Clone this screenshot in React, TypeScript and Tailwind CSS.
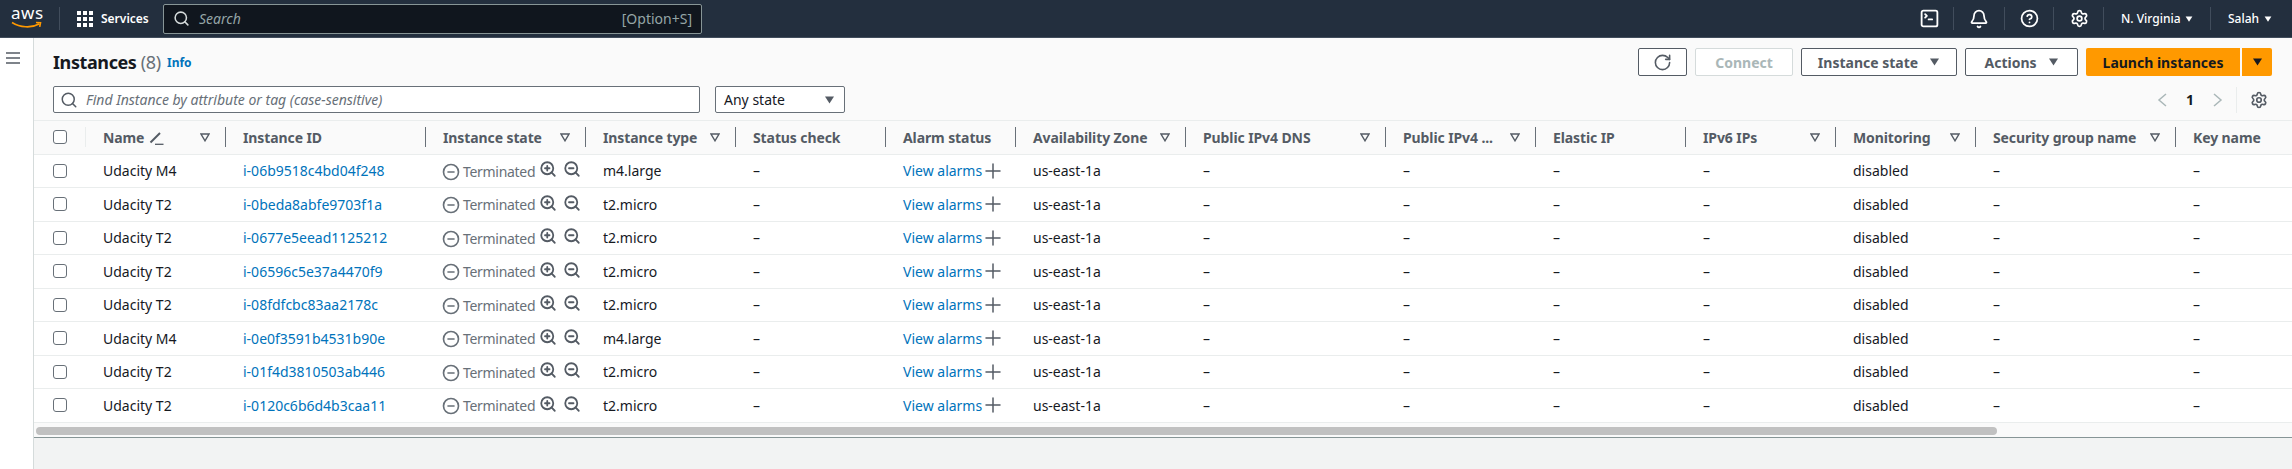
import { Bell, CircleHelp, CircleMinus, Plus, RotateCw, Search, Settings, SquareTerminal, ZoomIn, ZoomOut } from "lucide-react";
import type { ReactNode } from "react";

const instances = [
  { name: "Udacity M4", id: "i-06b9518c4bd04f248", type: "m4.large" },
  { name: "Udacity T2", id: "i-0beda8abfe9703f1a", type: "t2.micro" },
  { name: "Udacity T2", id: "i-0677e5eead1125212", type: "t2.micro" },
  { name: "Udacity T2", id: "i-06596c5e37a4470f9", type: "t2.micro" },
  { name: "Udacity T2", id: "i-08fdfcbc83aa2178c", type: "t2.micro" },
  { name: "Udacity M4", id: "i-0e0f3591b4531b90e", type: "m4.large" },
  { name: "Udacity T2", id: "i-01f4d3810503ab446", type: "t2.micro" },
  { name: "Udacity T2", id: "i-0120c6b6d4b3caa11", type: "t2.micro" },
];

const columns = [
  { label: "Instance ID", filter: false },
  { label: "Instance state", filter: true },
  { label: "Instance type", filter: true },
  { label: "Status check", filter: false },
  { label: "Alarm status", filter: false },
  { label: "Availability Zone", filter: true },
  { label: "Public IPv4 DNS", filter: true },
  { label: "Public IPv4 ...", filter: true },
  { label: "Elastic IP", filter: false },
  { label: "IPv6 IPs", filter: true },
  { label: "Monitoring", filter: true },
  { label: "Security group name", filter: true },
];

const rowGrid =
  "grid grid-cols-[52px_140px_200px_160px_150px_150px_130px_170px_200px_150px_150px_150px_140px_200px_116px]";

const Caret = ({ className }: { className: string }) => (
  <svg viewBox="0 0 10 8" className={className} fill="currentColor">
    <path d="M0.5 0.5h9L5 7.5z" />
  </svg>
);

const FilterIcon = () => (
  <svg viewBox="0 0 10 9" className="w-[10px] h-[9px] text-[#545b64] shrink-0" fill="none" stroke="currentColor" strokeWidth="1.4">
    <path d="M1 1h8L5 7.8z" />
  </svg>
);

const PencilIcon = () => (
  <svg viewBox="0 0 15 15" className="w-[15px] h-[15px] text-[#545b64] ml-[5px]" fill="none" stroke="currentColor">
    <path d="M1.5 12.5 11 3" strokeWidth="2" />
    <path d="M6 14.3h8.5" strokeWidth="1.3" />
  </svg>
);

const NavDivider = () => <div className="w-px h-[23px] bg-[#414d5c]" />;

// keeps the drawn part of a lucide icon on a 16px slot, whatever its padding
const NavIcon = ({ children }: { children: ReactNode }) => <div className="w-4 flex justify-center">{children}</div>;

const HeaderCell = ({ label, filter }: { label: string; filter: boolean }) => (
  <div className="flex items-center pl-[17px] h-full">
    <span className="flex-1 whitespace-nowrap">{label}</span>
    {filter && <FilterIcon />}
    <div className="w-px h-5 bg-[#687078] ml-[15px]" />
  </div>
);

const Checkbox = () => <div className="w-[14px] h-[14px] border border-[#687078] rounded-[3px] bg-white" />;

const Dash = () => <div className="pl-[17px] text-[#16191f]">–</div>;

function TopNav() {
  return (
    <header className="h-[38px] shrink-0 bg-[#232f3e] border-b border-[#414d5c] flex items-center text-white">
      <div className="w-[59px] pl-[11px] flex flex-col items-start leading-none">
        <span className="text-[17px] leading-[14px] font-normal tracking-[0.5px] -mt-[3px]">aws</span>
        <svg viewBox="0 0 32 8" className="w-[32px] h-[8px] text-[#ff9900] mt-[1px]" fill="none" stroke="currentColor" strokeWidth="1.6">
          <path d="M1 1.5c8 5 19 6 27 1.5M25 1.5l4.5.3-.8 4" />
        </svg>
      </div>
      <NavDivider />
      <div className="grid grid-cols-3 gap-[2px] w-[16px] ml-[17px]">
        {Array.from({ length: 9 }).map((_, i) => (
          <div key={i} className="w-[4px] h-[4px] bg-white" />
        ))}
      </div>
      <span className="ml-[8px] w-[62px] text-[12px] font-semibold">Services</span>
      <div className="w-[539px] h-[30px] bg-[#10161e] border border-[#879596] rounded-[2px] flex items-center pl-[9px] pr-[9px] text-[14px] text-[#95a5a6]">
        <Search size={17} strokeWidth={2.2} className="text-[#d5dbdb]" />
        <span className="ml-[9px] flex-1 italic">Search</span>
        <span>[Option+S]</span>
      </div>
      <div className="flex-1" />
      <NavIcon><SquareTerminal size={21} strokeWidth={2.1} className="shrink-0" /></NavIcon>
      <div className="ml-[16px]"><NavDivider /></div>
      <div className="ml-[17px]"><NavIcon><Bell size={20} strokeWidth={2.1} className="shrink-0" /></NavIcon></div>
      <div className="ml-[17px]"><NavDivider /></div>
      <div className="ml-[16px]"><NavIcon><CircleHelp size={19} strokeWidth={2.2} className="shrink-0" /></NavIcon></div>
      <div className="ml-[16px]"><NavDivider /></div>
      <div className="ml-[17px]"><NavIcon><Settings size={19} strokeWidth={2.2} className="shrink-0" /></NavIcon></div>
      <div className="ml-[16px]"><NavDivider /></div>
      <span className="ml-[17px] w-[64px] text-[12px] font-medium whitespace-nowrap">N. Virginia</span>
      <Caret className="w-[8px] h-[6px]" />
      <div className="ml-[17px]"><NavDivider /></div>
      <span className="ml-[17px] w-[36px] text-[12px] font-medium">Salah</span>
      <Caret className="w-[8px] h-[6px] mr-[20px]" />
    </header>
  );
}

function Toolbar() {
  return (
    <div className="pl-[19px] pr-[20px] pt-[10px] pb-[7px]">
      <div className="flex items-center h-[28px]">
        <h1 className="w-[105px] text-[18px] font-bold text-[#16191f] tracking-[-0.4px] whitespace-nowrap">
          Instances <span className="font-normal text-[#687078]">(8)</span>
        </h1>
        <span className="ml-[9px] mt-[2px] text-[12px] font-bold text-[#0073bb]">Info</span>
        <div className="flex-1" />
        <div className="flex h-[28px] text-[14px] font-bold text-[#545b64]">
          <button className="w-[49px] bg-white border border-[#545b64] rounded-[2px] flex items-center justify-center">
            <RotateCw size={19} strokeWidth={2} />
          </button>
          <button className="w-[98px] ml-[8px] bg-white border border-[#d5dbdb] rounded-[2px] text-[#aab7b8]">Connect</button>
          <button className="w-[156px] ml-[8px] bg-white border border-[#545b64] rounded-[2px] flex items-center justify-center">
            Instance state
            <Caret className="w-[11px] h-[8px] ml-[11px]" />
          </button>
          <button className="w-[113px] ml-[8px] bg-white border border-[#545b64] rounded-[2px] flex items-center justify-center">
            Actions
            <Caret className="w-[11px] h-[8px] ml-[11px]" />
          </button>
          <button className="w-[154px] ml-[8px] bg-[#ff9900] rounded-l-[2px] text-[#16191f]">Launch instances</button>
          <button className="w-[30px] ml-[2px] bg-[#ff9900] rounded-r-[2px] text-[#16191f] flex items-center justify-center">
            <Caret className="w-[11px] h-[8px]" />
          </button>
        </div>
      </div>
      <div className="flex items-center h-[27px] mt-[10px]">
        <div className="w-[647px] h-full bg-white border border-[#687078] rounded-[2px] flex items-center pl-[6px] text-[14px] italic text-[#687078]">
          <Search size={18} strokeWidth={2} className="text-[#545b64]" />
          <span className="ml-[8px]">Find Instance by attribute or tag (case-sensitive)</span>
        </div>
        <div className="w-[130px] h-full ml-[15px] bg-white border border-[#687078] rounded-[2px] flex items-center justify-between pl-[8px] pr-[9px] text-[14px] text-[#16191f]">
          Any state
          <Caret className="w-[11px] h-[8px] text-[#545b64]" />
        </div>
        <div className="flex-1" />
        <div className="flex items-center text-[#16191f]">
          <svg viewBox="0 0 10 14" className="w-[10px] h-[14px] text-[#aab7b8]" fill="none" stroke="currentColor" strokeWidth="1.5">
            <path d="M9 1 2 7l7 6" />
          </svg>
          <span className="w-[46px] text-center text-[14px] font-bold">1</span>
          <svg viewBox="0 0 10 14" className="w-[10px] h-[14px] text-[#aab7b8]" fill="none" stroke="currentColor" strokeWidth="1.5">
            <path d="M1 1l7 6-7 6" />
          </svg>
          <div className="w-px h-[26px] bg-[#eaeded] ml-[13px]" />
          <Settings size={18} strokeWidth={2.2} className="text-[#545b64] ml-[13px] mr-[4px]" />
        </div>
      </div>
    </div>
  );
}

function InstanceTable() {
  return (
    <div className="border-t border-[#eaeded] overflow-hidden">
      <div className={`${rowGrid} h-[33.5px] items-center bg-[#fafafa] border-b border-[#eaeded] text-[14px] font-bold text-[#545b64] tracking-[-0.1px]`}>
        <div className="flex items-center justify-between pl-[19px] h-full">
          <Checkbox />
          <div className="w-px h-5 bg-[#eaeded]" />
        </div>
        <div className="flex items-center pl-[17px] h-full">
          <span>Name</span>
          <PencilIcon />
          <div className="flex-1" />
          <FilterIcon />
          <div className="w-px h-5 bg-[#687078] ml-[15px]" />
        </div>
        {columns.map((col) => (
          <HeaderCell key={col.label} label={col.label} filter={col.filter} />
        ))}
        <div className="pl-[17px]">Key name</div>
      </div>
      {instances.map((inst) => (
        <div key={inst.id} className={`${rowGrid} h-[33.5px] items-center bg-white border-b border-[#eaeded] text-[14px] text-[#16191f]`}>
          <div className="pl-[19px]"><Checkbox /></div>
          <div className="pl-[17px]">{inst.name}</div>
          <div className="pl-[17px] text-[#0073bb]">{inst.id}</div>
          <div className="pl-[15.5px] flex items-center text-[#687078]">
            <CircleMinus size={18} strokeWidth={2.2} className="mt-[2px] shrink-0" />
            <span className="ml-[3.5px] mt-[1px] tracking-[-0.3px]">Terminated</span>
            <ZoomIn size={18} strokeWidth={2.4} className="ml-[4px] -mt-[3px] text-[#545b64] shrink-0" />
            <ZoomOut size={18} strokeWidth={2.4} className="ml-[6px] -mt-[3px] text-[#545b64] shrink-0" />
          </div>
          <div className="pl-[17px]">{inst.type}</div>
          <Dash />
          <div className="pl-[17px] flex items-center">
            <span className="text-[#0073bb] w-[78px] whitespace-nowrap">View alarms</span>
            <Plus size={24} strokeWidth={1.5} className="text-[#545b64] shrink-0" />
          </div>
          <div className="pl-[17px]">us-east-1a</div>
          <Dash />
          <Dash />
          <Dash />
          <Dash />
          <div className="pl-[17px]">disabled</div>
          <Dash />
          <Dash />
        </div>
      ))}
      <div className="h-[15px] bg-[#fafafa] pl-[2px] pt-[4px] border-b border-[#879596]">
        <div className="w-[1961px] h-[8px] rounded-full bg-[#c1c1c1]" />
      </div>
    </div>
  );
}

export default function App() {
  return (
    <div className="w-[2292px] h-[469px] overflow-hidden flex flex-col font-['Noto_Sans',sans-serif] bg-white">
      <TopNav />
      <div className="flex-1 flex min-h-0">
        <aside className="w-[34px] shrink-0 bg-white border-r border-[#d5dbdb] pl-[6px] pt-[14px]">
          <svg viewBox="0 0 14 12" className="w-[14px] h-[12px] text-[#545b64]" fill="none" stroke="currentColor" strokeWidth="1.6">
            <path d="M0 1h14M0 6h14M0 11h14" />
          </svg>
        </aside>
        <main className="flex-1 min-w-0 bg-[#f2f3f3] flex flex-col">
          <div className="bg-[#fafafa]">
            <Toolbar />
            <InstanceTable />
          </div>
        </main>
      </div>
    </div>
  );
}
